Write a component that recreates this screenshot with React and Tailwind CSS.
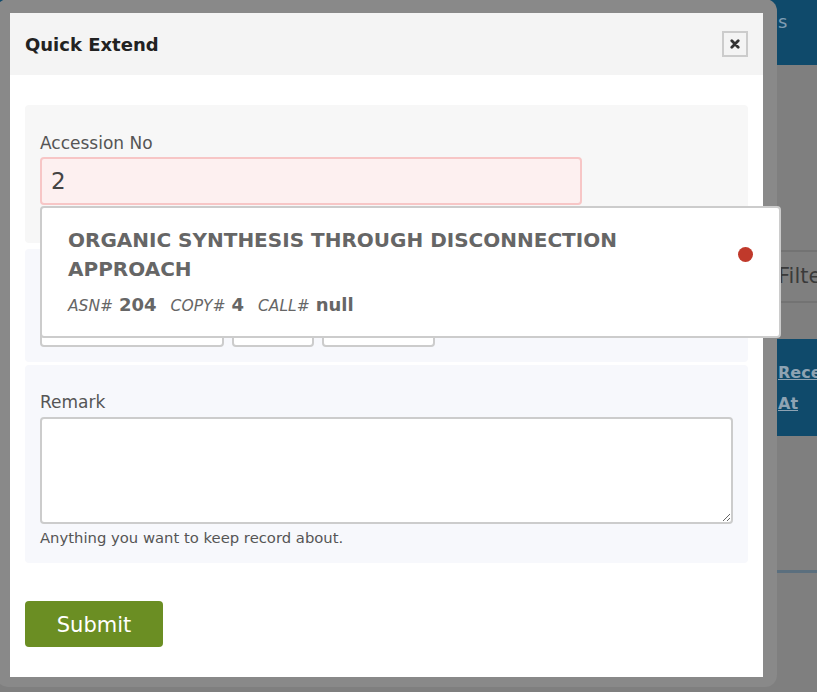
import React from "react";

export default function App() {
  const font = { fontFamily: '"DejaVu Sans", Verdana, sans-serif' };
  return (
    <div className="relative w-[817px] h-[692px] overflow-hidden bg-[#7f7f7f]" style={font}>
      {/* background page (under overlay) */}
      <div className="flex flex-col w-full h-full">
        <div className="h-[65px] bg-[#0f4a6b] flex">
          <span className="text-[#7f9db3] text-[18px] pt-[8px] pl-[778px] w-full">s</span>
        </div>
        <div className="h-[185px]"></div>
        <div className="h-[53px] border-y-2 border-[#737373] flex items-center pl-[778px] overflow-hidden">
          <span className="text-[#3a3a3a] text-[21px] whitespace-nowrap">Filter</span>
        </div>
        <div className="h-[36px]"></div>
        <div className="h-[97px] bg-[#0f4a6b] pl-[778px] pt-[18px] flex flex-col text-[16px] font-bold text-[#8ea3b3] leading-[31px] overflow-hidden">
          <span className="underline whitespace-nowrap">Received</span>
          <span className="underline">At</span>
        </div>
        <div className="h-[134px]"></div>
        <div className="h-[3px] bg-[#5b6f7e]"></div>
      </div>

      {/* modal frame */}
      <div className="absolute left-[-4px] top-[-1px] w-[781px] h-[688px] rounded-[12px] bg-[#898989] pt-[14px] px-[14px] pb-[10px]">
        <div className="w-full h-full bg-white flex flex-col">
          {/* header */}
          <div className="h-[62px] bg-[#f4f4f4] flex items-center justify-between pl-[15px] pr-[15px]">
            <span className="text-[18px] font-bold text-[#222]">Quick Extend</span>
            <button className="w-[26px] h-[26px] border-2 border-[#cccccc] flex items-center justify-center bg-[#f4f4f4]">
              <svg width="10" height="10" viewBox="0 0 10 10">
                <path d="M1.8 1.8 L8.2 8.2 M8.2 1.8 L1.8 8.2" stroke="#333" strokeWidth="2.8" strokeLinecap="round" />
              </svg>
            </button>
          </div>

          {/* body */}
          <div className="flex flex-col px-[15px] pt-[30px]">
            {/* section 1 */}
            <div className="bg-[#f7f7f7] rounded-[4px] px-[15px] pt-[26px] pb-[38px] h-[138px]">
              <div className="text-[17px] leading-[24px] text-[#555]">Accession No</div>
              <div className="relative mt-[2px]">
                <div className="w-[542px] h-[48px] bg-[#fdf0f0] border-2 border-[#f7c6c6] rounded-[4px] flex items-center pl-[9px] text-[23px] text-[#444]">
                  2
                </div>
                {/* dropdown */}
                <div className="absolute left-0 top-[49px] w-[741px] h-[132px] bg-white border-2 border-[#cccccc] rounded-[4px] z-10 pl-[26px] pr-[26px] pt-[18px] flex">
                  <div className="flex-1 flex flex-col">
                    <div className="text-[20px] leading-[29px] font-bold text-[#666] w-[620px]">
                      ORGANIC SYNTHESIS THROUGH DISCONNECTION APPROACH
                    </div>
                    <div className="mt-[7px] flex items-baseline text-[#666] whitespace-nowrap">
                      <span className="italic text-[15.5px]">ASN#</span>
                      <span className="font-bold text-[18px] ml-[6px]">204</span>
                      <span className="italic text-[15.5px] ml-[14px]">COPY#</span>
                      <span className="font-bold text-[18px] ml-[6px]">4</span>
                      <span className="italic text-[15.5px] ml-[14px]">CALL#</span>
                      <span className="font-bold text-[18px] ml-[6px]">null</span>
                    </div>
                  </div>
                  <div className="pt-[21px]">
                    <div className="w-[15px] h-[15px] rounded-full bg-[#c0392b]"></div>
                  </div>
                </div>
              </div>
            </div>

            {/* section 2 */}
            <div className="mt-[6px] bg-[#f7f8fc] rounded-[4px] h-[113px] px-[15px] pt-[58px]">
              <div className="flex gap-[8px]">
                <div className="w-[184px] h-[40px] bg-white border-2 border-[#cccccc] rounded-[4px]"></div>
                <div className="w-[82px] h-[40px] bg-white border-2 border-[#cccccc] rounded-[4px]"></div>
                <div className="w-[113px] h-[40px] bg-white border-2 border-[#cccccc] rounded-[4px]"></div>
              </div>
            </div>

            {/* section 3 */}
            <div className="mt-[3px] bg-[#f7f8fc] rounded-[4px] h-[198px] px-[15px] pt-[25px]">
              <div className="text-[17px] leading-[24px] text-[#555]">Remark</div>
              <textarea className="block mt-[3px] w-[693px] h-[107px] bg-white border-2 border-[#cccccc] rounded-[4px] outline-none resize-y"></textarea>
              <div className="mt-[5px] text-[14.8px] leading-[18px] text-[#555]">Anything you want to keep record about.</div>
            </div>

            <div className="mt-[38px]">
              <button className="w-[138px] h-[46px] bg-[#6b8e23] rounded-[4px] text-white text-[21px] pt-[4px]">Submit</button>
            </div>
          </div>
        </div>
      </div>
    </div>
  );
}
